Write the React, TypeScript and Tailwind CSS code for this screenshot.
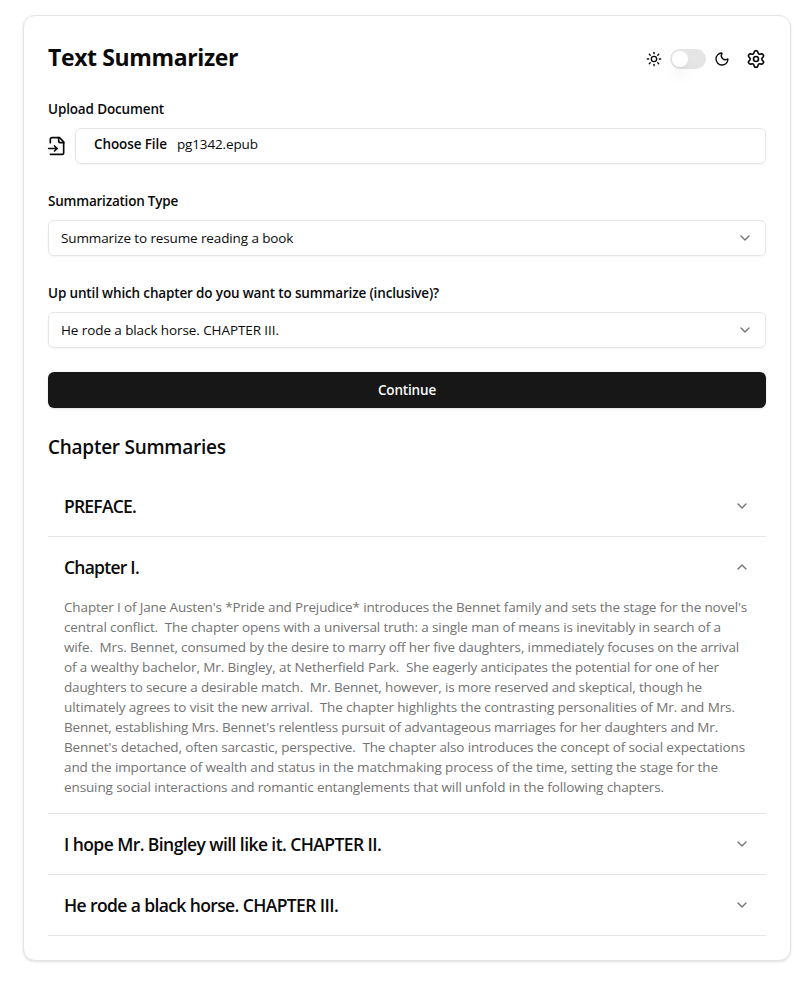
import { ReactNode } from "react";
import { ChevronDown, Moon, Settings, Sun } from "lucide-react";

function FileInputIcon() {
  return (
    <svg
      viewBox="0 0 24 24"
      fill="none"
      stroke="currentColor"
      strokeWidth="2"
      strokeLinecap="round"
      strokeLinejoin="round"
      className="-ml-px size-5 shrink-0"
    >
      <path d="M4 22h14a2 2 0 0 0 2-2V7l-5-5H6a2 2 0 0 0-2 2v4" />
      <path d="M14 2v4a2 2 0 0 0 2 2h4" />
      <path d="M2 15h10" />
      <path d="m9 18 3-3-3-3" />
    </svg>
  );
}

function Chevron({ up = false }: { up?: boolean }) {
  return (
    <ChevronDown
      className={up ? "size-4 shrink-0 rotate-180 text-[#737373]" : "size-4 shrink-0 text-[#737373]"}
    />
  );
}

function Label({ className, children }: { className: string; children: ReactNode }) {
  return (
    <label className={`block h-[18px] text-[13.5px] leading-[18px] font-semibold whitespace-nowrap ${className}`}>
      {children}
    </label>
  );
}

function Select({ className, children }: { className: string; children: ReactNode }) {
  return (
    <button className="mt-2.5 flex h-9 w-full items-center justify-between rounded-md border border-[#e5e5e5] px-3 text-[13.5px] shadow-xs">
      <span className={`whitespace-nowrap ${className}`}>{children}</span>
      <Chevron />
    </button>
  );
}

type ItemProps = { title: string; tracking: string; open?: boolean; children?: ReactNode };

function AccordionItem({ title, tracking, open = false, children }: ItemProps) {
  return (
    <div className="border-b border-[#e5e5e5]">
      <button className="flex h-[60px] w-full items-center justify-between px-4">
        <span className={`pt-px text-[17.5px] font-semibold whitespace-nowrap ${tracking}`}>{title}</span>
        <Chevron up={open} />
      </button>
      {open && <div className="px-4 pb-4">{children}</div>}
    </div>
  );
}

export default function App() {
  return (
    <div className="min-h-[981px] bg-white pt-[15px] pl-[23px] font-['Open_Sans','Noto_Sans',sans-serif] text-[#0a0a0a]">
      <main className="h-[946px] w-[768px] rounded-xl border border-[#e5e5e5] bg-white p-6 shadow-sm">
        <header className="flex h-9 items-center justify-between">
          <h1 className="pb-px text-[23px] font-bold tracking-[-0.38px] whitespace-nowrap">Text Summarizer</h1>
          <div className="flex items-center pt-0.5">
            <Sun className="size-4" />
            <button className="mx-2 flex h-5 w-9 items-center rounded-full bg-[#e5e5e5] px-0.5">
              <span className="size-4 rounded-full bg-white shadow-lg" />
            </button>
            <Moon className="size-4" />
            <Settings className="ml-4 size-5" />
          </div>
        </header>

        <section className="pt-6">
          <Label className="tracking-[-0.14px]">Upload Document</Label>
          <div className="mt-2.5 flex items-center gap-2">
            <FileInputIcon />
            <div className="flex h-9 flex-1 items-center gap-2.5 rounded-md border border-[#e5e5e5] pb-[3px] pl-[18px] text-[13.5px] shadow-xs">
              <span className="font-semibold tracking-[-0.1px]">Choose File</span>
              <span className="tracking-[-0.13px]">pg1342.epub</span>
            </div>
          </div>
        </section>

        <section className="pt-7">
          <Label className="tracking-[-0.22px]">Summarization Type</Label>
          <Select className="tracking-[-0.12px]">Summarize to resume reading a book</Select>
        </section>

        <section className="pt-7">
          <Label className="tracking-[-0.15px]">
            Up until which chapter do you want to summarize (inclusive)?
          </Label>
          <Select className="tracking-[-0.09px]">He rode a black horse. CHAPTER III.</Select>
        </section>

        <button className="mt-6 flex h-9 w-full items-center justify-center rounded-md bg-[#171717] text-[13.5px] font-semibold tracking-[-0.17px] text-[#fafafa] shadow-sm">
          Continue
        </button>

        <h2 className="mt-6 mb-4 h-7 text-[19px] leading-[31px] font-semibold tracking-[-0.26px]">
          Chapter Summaries
        </h2>

        <AccordionItem title="PREFACE." tracking="tracking-[-0.78px]" />
        <AccordionItem title="Chapter I." tracking="tracking-[-0.75px]" open>
          <div className="text-[13.5px] leading-5 whitespace-pre text-[#737373]">
            <p className="tracking-[-0.133px]">{"Chapter I of Jane Austen's *Pride and Prejudice* introduces the Bennet family and sets the stage for the novel's"}</p>
            <p className="tracking-[-0.125px]">{"central conflict.  The chapter opens with a universal truth: a single man of means is inevitably in search of a"}</p>
            <p className="tracking-[-0.143px]">{"wife.  Mrs. Bennet, consumed by the desire to marry off her five daughters, immediately focuses on the arrival"}</p>
            <p className="tracking-[-0.106px]">{"of a wealthy bachelor, Mr. Bingley, at Netherfield Park.  She eagerly anticipates the potential for one of her"}</p>
            <p className="tracking-[-0.151px]">{"daughters to secure a desirable match.  Mr. Bennet, however, is more reserved and skeptical, though he"}</p>
            <p className="tracking-[-0.103px]">{"ultimately agrees to visit the new arrival.  The chapter highlights the contrasting personalities of Mr. and Mrs."}</p>
            <p className="tracking-[-0.16px]">{"Bennet, establishing Mrs. Bennet's relentless pursuit of advantageous marriages for her daughters and Mr."}</p>
            <p className="tracking-[-0.142px]">{"Bennet's detached, often sarcastic, perspective.  The chapter also introduces the concept of social expectations"}</p>
            <p className="tracking-[-0.106px]">{"and the importance of wealth and status in the matchmaking process of the time, setting the stage for the"}</p>
            <p className="tracking-[-0.117px]">{"ensuing social interactions and romantic entanglements that will unfold in the following chapters."}</p>
          </div>
        </AccordionItem>
        <AccordionItem title="I hope Mr. Bingley will like it. CHAPTER II." tracking="tracking-[-0.58px]" />
        <AccordionItem title="He rode a black horse. CHAPTER III." tracking="tracking-[-0.61px]" />
      </main>
    </div>
  );
}
